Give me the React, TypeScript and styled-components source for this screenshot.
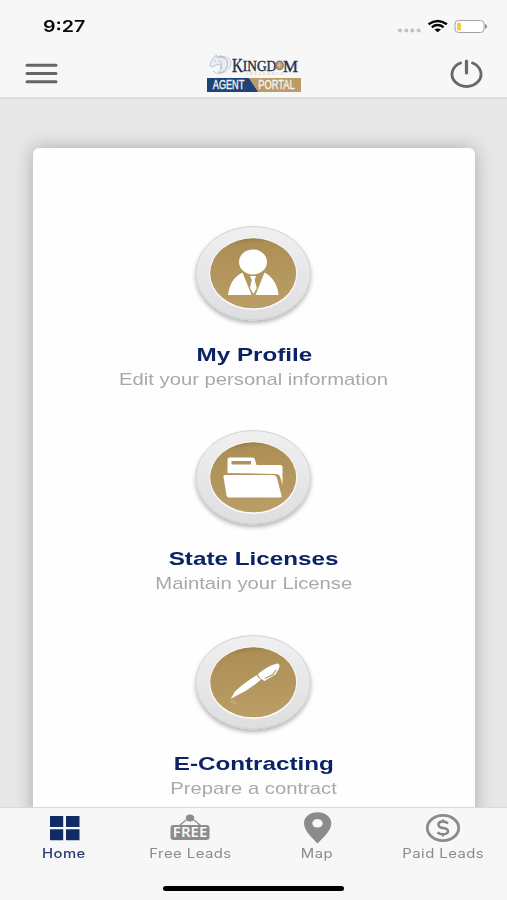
import React from 'react';
import styled, { createGlobalStyle } from 'styled-components';

const GlobalStyle = createGlobalStyle`
  * { box-sizing: border-box; }
  body { margin: 0; background: #e7e7e7; font-family: "Liberation Sans", Arial, sans-serif; }
`;

const Screen = styled.div`
  display: flex;
  flex-direction: column;
  width: 507px;
  height: 900px;
  overflow: hidden;
  background: #e7e7e7;
`;

const Header = styled.header`
  flex: none;
  height: 99px;
  background: #f7f7f7;
  border-bottom: 2px solid #dedede;
`;

const StatusBar = styled.div`
  display: flex;
  justify-content: space-between;
  height: 49px;
  padding: 15px 18px 0 43px;
`;

const Clock = styled.span`
  font: 600 16.5px/22px Inter, sans-serif;
  color: #080808;
  transform: scaleX(1.19);
  transform-origin: left;
`;

const StatusIcons = styled.svg`
  width: 92px;
  height: 20px;
  margin-top: 1px;
  display: block;
`;

const NavBar = styled.div`
  display: grid;
  grid-template-columns: 1fr auto 1fr;
  height: 48px;
  padding: 0 24px 0 25px;
  align-items: start;
`;

const IconButton = styled.button<{ $end?: boolean }>`
  justify-self: ${(p) => (p.$end ? 'end' : 'start')};
  display: block;
  padding: 0;
  border: 0;
  background: none;
  height: 48px;
  svg { display: block; }
`;

const Logo = styled.svg`
  display: block;
  width: 96px;
  height: 44px;
`;

const Main = styled.main`
  flex: 1;
  min-height: 0;
  overflow: hidden;
  padding: 49px 32px 0 33px;
`;

const Card = styled.section`
  display: flex;
  flex-direction: column;
  align-items: center;
  height: 740px;
  padding-top: 67px;
  background: #fefefe;
  border-radius: 6px;
  box-shadow: 0 0 18px rgba(0, 0, 0, 0.27);
`;

const Entry = styled.div`
  display: flex;
  flex-direction: column;
  align-items: center;
  flex: none;
  height: 204.4px;
`;

const Medallion = styled.svg`
  display: block;
  width: 132px;
  height: 120px;
  flex: none;
`;

const Title = styled.h2`
  margin: 8px 0 0;
  font-size: 19px;
  line-height: 24px;
  font-weight: 700;
  color: #0b2265;
  white-space: nowrap;
  transform: scaleX(1.275);
`;

const Caption = styled.p`
  margin: 1px 0 0;
  font-size: 16.2px;
  line-height: 22px;
  color: #a9a9a9;
  white-space: nowrap;
  transform: scaleX(1.25);
`;

const TabBar = styled.nav`
  flex: none;
  display: flex;
  flex-direction: column;
  align-items: center;
  height: 93px;
  background: #f7f7f7;
  border-top: 1px solid #d9d9d9;
`;

const Tabs = styled.div`
  display: grid;
  grid-template-columns: repeat(4, 126.2px);
  height: 77.5px;
`;

const Tab = styled.div`
  display: flex;
  flex-direction: column;
  align-items: center;
  svg { display: block; width: 44px; height: 36px; }
`;

const TabLabel = styled.span<{ $active?: boolean }>`
  margin-top: 1px;
  font: ${(p) => (p.$active ? 500 : 400)} 12.8px/18px Inter, sans-serif;
  color: ${(p) => (p.$active ? '#293a78' : '#8a8a8a')};
  letter-spacing: 0.4px;
  white-space: nowrap;
  transform: scaleX(1.16);
`;

const HomeIndicator = styled.div`
  width: 181px;
  height: 5px;
  border-radius: 3px;
  background: #000;
`;

const ProfileGlyph = () => (
  <g fill="#fff">
    <ellipse cx="65" cy="47" rx="14" ry="12.500" />
    <path d="M40 80c1-9 5-18 14.500-22.500L63.500 80z" />
    <path d="M67.500 80l9-22.500C85 62 89.500 70 90.500 80z" />
    <path d="M62 61h6l-1.400 4 2.200 8-3.300 6-3.500-6 1.800-8z" />
  </g>
);

const FolderGlyph = () => (
  <g fill="#fff">
    <path fillRule="evenodd" d="M39.500 54V40.500q0-2 2-2h23q2 0 2.500 2l1.500 5.500h24q2 0 2 2v18l-2-7q-1-4-5-4zM43.500 42v3.500h19.500v-3.500z" />
    <path d="M37 56h48q3 0 4 3l4.500 17.500q.4 2-1.500 2H41q-2 0-2.500-2l-3-18.500q-.3-2 1.500-2z" />
  </g>
);

const PenGlyph = () => (
  <g>
    <path fill="#fff" d="M42.500 75l4.500-7.500q9-8.500 22-16.500 1 3.500 4 4.500-11 10-26 17z" />
    <path fill="#fff" d="M70 50q9-8 19.500-10.500 3 .5 1.500 5l-3.500 6-11 6.500-3-2q-2.500-1-3.500-5z" />
    <path stroke="#b0955c" strokeWidth="1.200" fill="none" d="M77 54.500l8-4 3-4.500" />
    <path stroke="#d5c49f" strokeWidth="2" opacity=".4" d="M43 77l6 3" />
  </g>
);

type ServiceProps = { id: string; title: string; caption: string; children: React.ReactNode };

const Service = ({ id, title, caption, children }: ServiceProps) => (
  <Entry>
    <Medallion viewBox="0 0 132 120" aria-label={title}>
      <defs>
        <linearGradient id={`ring-${id}`} x1="0" y1="0" x2="0" y2="1">
          <stop offset="0" stopColor="#f0f0f1" />
          <stop offset="1" stopColor="#dedee1" />
        </linearGradient>
        <linearGradient id={`gold-${id}`} x1="0" y1="0" x2="0.15" y2="1">
          <stop offset="0" stopColor="#8b6d3c" />
          <stop offset="0.15" stopColor="#ad8f56" />
          <stop offset="1" stopColor="#b99d65" />
        </linearGradient>
        <filter id={`shade-${id}`} x="-20%" y="-20%" width="140%" height="150%">
          <feDropShadow dx="0" dy="3" stdDeviation="2" floodOpacity=".28" />
        </filter>
      </defs>
      <ellipse cx="65.200" cy="58.200" rx="57.300" ry="46.700" fill={`url(#ring-${id})`} stroke="#d2d2d4" filter={`url(#shade-${id})`} />
      <ellipse cx="65.200" cy="58.800" rx="44" ry="36.300" fill="#fafafa" />
      <ellipse cx="65.200" cy="58.300" rx="43" ry="35" fill={`url(#gold-${id})`} />
      {children}
    </Medallion>
    <Title>{title}</Title>
    <Caption>{caption}</Caption>
  </Entry>
);

export default function App() {
  return (
    <Screen>
      <GlobalStyle />
      <Header>
        <StatusBar>
          <Clock>9:27</Clock>
          <StatusIcons viewBox="0 0 92 20">
            <g fill="#c2c2c2">
              <circle cx="3" cy="14.500" r="2" />
              <circle cx="9.300" cy="14.500" r="2" />
              <circle cx="15.300" cy="14.500" r="2" />
              <circle cx="21.700" cy="14.500" r="2" />
            </g>
            <g fill="none" stroke="#050505" strokeWidth="2.400">
              <path d="M31.500 8.200q9.200-6.600 18.400 0" />
              <path d="M34.800 11.200q5.900-4.200 11.800 0" />
            </g>
            <path d="M37.400 13.500q3.300-2.200 6.600 0L40.700 16.200z" fill="#050505" />
            <rect x="58" y="4.500" width="29" height="12" rx="3.500" fill="#fff" stroke="#a2a2a2" />
            <rect x="60" y="6.500" width="4" height="8" rx="1.500" fill="#f4ca46" />
            <path d="M88.500 8.500q2.500 2 0 4z" fill="#8a8a8a" stroke="#8a8a8a" />
          </StatusIcons>
        </StatusBar>
        <NavBar>
          <IconButton aria-label="Menu">
            <svg width="34" height="48" viewBox="0 0 34 48">
              <path d="M2 16.300h29M2 24.500h29M2 32.700h29" stroke="#656565" strokeWidth="3" strokeLinecap="round" />
            </svg>
          </IconButton>
          <Logo viewBox="0 0 96 44">
            <g fill="none" stroke="#aebacb" strokeWidth=".8">
              <path d="M4 15q2-4 3-6l2-1 1-2 2 2q6-1 9 4 2 4-1 8-2 4-8 4l4-5-2-4-4 1-3 2-3-1z" fill="#e9edf2" />
              <path d="M10 8q11-1 12 6-1 8-9 11M13 7q12 0 12 8-2 7-9 9M13 11l3 4-2 5M7 22l5 3M8 12h2" />
            </g>
            <g fill="#26314b" stroke="#26314b" strokeWidth=".4" fontFamily="Liberation Serif, serif">
              <text x="26" y="22.500" fontSize="18.500" textLength="11" lengthAdjust="spacingAndGlyphs">K</text>
              <text x="36.800" y="21.500" fontSize="15" textLength="33.500" lengthAdjust="spacingAndGlyphs">INGD</text>
              <text x="77" y="22.500" fontSize="17" textLength="15" lengthAdjust="spacingAndGlyphs">M</text>
            </g>
            <ellipse cx="73.500" cy="16.300" rx="3.800" ry="4.300" fill="#b39b75" stroke="#59545b" strokeWidth=".8" />
            <path d="M71 16h5M73.500 13.500v5" stroke="#ded0b8" strokeWidth=".7" />
            <text x="41" y="26" fill="#d6c2a1" fontFamily="Liberation Sans, sans-serif" fontSize="3.500" textLength="36">INSURANCE</text>
            <path d="M1 29h42l10 14H1z" fill="#1e427a" />
            <path d="M43 29h52v14H52z" fill="#bd9a67" />
            <g fill="#f3f1ed" fontFamily="Liberation Sans, sans-serif" fontSize="12.200" stroke="#f3f1ed" strokeWidth=".4">
              <text x="6.800" y="40.100" textLength="31.500" lengthAdjust="spacingAndGlyphs">AGENT</text>
              <text x="52.300" y="40.100" textLength="36.500" lengthAdjust="spacingAndGlyphs">PORTAL</text>
            </g>
          </Logo>
          <IconButton $end aria-label="Log out">
            <svg width="34" height="48" viewBox="0 0 34 48" fill="none" stroke="#686868" strokeWidth="2.800" strokeLinecap="round">
              <path d="M11.500 14A14.500 12.300 0 1 0 23.500 14" />
              <path d="M17.500 12v12" strokeWidth="3.200" />
            </svg>
          </IconButton>
        </NavBar>
      </Header>
      <Main>
        <Card>
          <Service id="profile" title="My Profile" caption="Edit your personal information"><ProfileGlyph /></Service>
          <Service id="licenses" title="State Licenses" caption="Maintain your License"><FolderGlyph /></Service>
          <Service id="contracting" title="E-Contracting" caption="Prepare a contract"><PenGlyph /></Service>
        </Card>
      </Main>
      <TabBar>
        <Tabs>
          <Tab>
            <svg viewBox="0 0 44 36" fill="#102c64">
              <path d="M8 8h13.200v11H8zM24 8H37.500v11H24zM8 21.300h13.200v11H8zM24 21.300H37.500v11H24z" />
            </svg>
            <TabLabel $active>Home</TabLabel>
          </Tab>
          <Tab>
            <svg viewBox="0 0 44 36">
              <ellipse cx="22" cy="10" rx="4.200" ry="3.500" fill="#8c8c8c" />
              <path d="M18 12l-6.500 5.500M26 12l6.500 5.500" stroke="#8c8c8c" strokeWidth="1.200" />
              <rect x="2.500" y="17" width="39" height="15" rx="3" fill="#8c8c8c" />
              <text x="4.800" y="29.200" textLength="34.500" lengthAdjust="spacingAndGlyphs" fill="#f7f7f7" fontFamily="Noto Sans, sans-serif" fontWeight="600" fontSize="13.500">FREE</text>
            </svg>
            <TabLabel>Free Leads</TabLabel>
          </Tab>
          <Tab>
            <svg viewBox="0 0 44 36">
              <path fill="#8b8b8b" fillRule="evenodd" d="M22.500 35.500C18.500 31 9 23 9 15.500 9 8.500 15 4.200 22.500 4.200s13.800 4.300 13.800 11.300C36.300 23 26.500 31 22.500 35.500zM22.500 11a5.200 4.300 0 1 0 .01 0z" />
            </svg>
            <TabLabel>Map</TabLabel>
          </Tab>
          <Tab>
            <svg viewBox="0 0 44 36">
              <ellipse cx="22" cy="20" rx="15.700" ry="12.600" fill="none" stroke="#8b8b8b" strokeWidth="2.800" />
              <path d="M27 15.500q-2-2-5-2-4.500 0-4.500 3t4.500 3.500q5 .5 5 3.300t-5 3q-3.500 0-5.500-2M22 11.500v2M22 26v2.500" fill="none" stroke="#858585" strokeWidth="2.400" />
            </svg>
            <TabLabel>Paid Leads</TabLabel>
          </Tab>
        </Tabs>
        <HomeIndicator />
      </TabBar>
    </Screen>
  );
}
